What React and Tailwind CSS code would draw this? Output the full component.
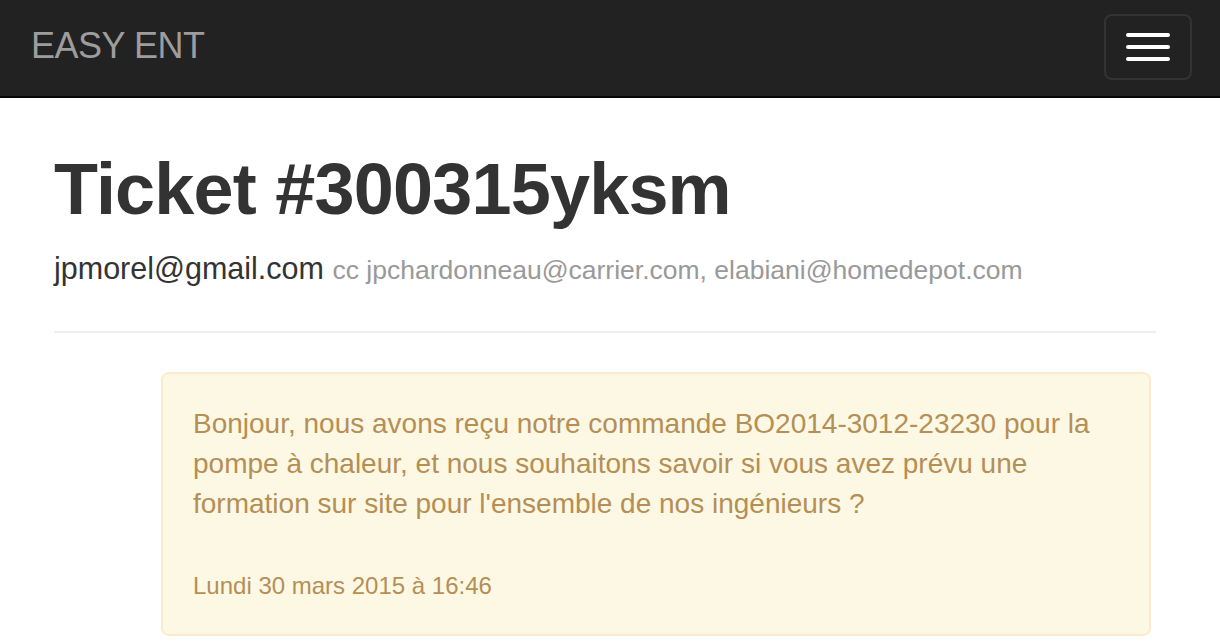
export default function App() {
  return (
    <div className="min-h-[643px] bg-white font-['Liberation_Sans',Arial,sans-serif]">
      <nav className="h-[98px] bg-[#222] border-b-2 border-[#080808] flex items-center justify-between pl-[31px] pr-[28px]">
        <span className="text-[36px] text-[#9d9d9d] leading-none tracking-[-0.5px] mt-[-4px]">EASY ENT</span>
        <button className="w-[88px] h-[66px] border-2 border-[#333] rounded-[8px] flex flex-col items-center justify-center gap-[8px] mt-[-2px]">
          <span className="block w-[44px] h-[4px] bg-white rounded-[2px]" />
          <span className="block w-[44px] h-[4px] bg-white rounded-[2px]" />
          <span className="block w-[44px] h-[4px] bg-white rounded-[2px]" />
        </button>
      </nav>
      <main className="pl-[54px] pr-[64px]">
        <h1 className="mt-[52px] text-[72px] leading-[1.1] text-[#333] font-bold tracking-[-0.8px]">Ticket #300315yksm</h1>
        <p className="mt-[16px] text-[30.5px] text-[#333] leading-[46px]">
          jpmorel@gmail.com{' '}
          <small className="text-[26.5px] text-[#999]">cc jpchardonneau@carrier.com, elabiani@homedepot.com</small>
        </p>
        <hr className="mt-[38px] border-t-2 border-[#eee]" />
        <div className="mt-[39px] ml-[107px] mr-[5px] bg-[#fcf8e3] border-2 border-[#faebcc] rounded-[8px] pl-[30px] pr-[30px] pt-[30px] pb-[31px] text-[#b58f56]">
          <p className="text-[28px] leading-[40px]">
            Bonjour, nous avons reçu notre commande BO2014-3012-23230 pour la pompe à chaleur, et nous souhaitons savoir si vous avez prévu une formation sur site pour l'ensemble de nos ingénieurs ?
          </p>
          <p className="mt-[45px] text-[24px] leading-[34px]">Lundi 30 mars 2015 à 16:46</p>
        </div>
      </main>
    </div>
  );
}
